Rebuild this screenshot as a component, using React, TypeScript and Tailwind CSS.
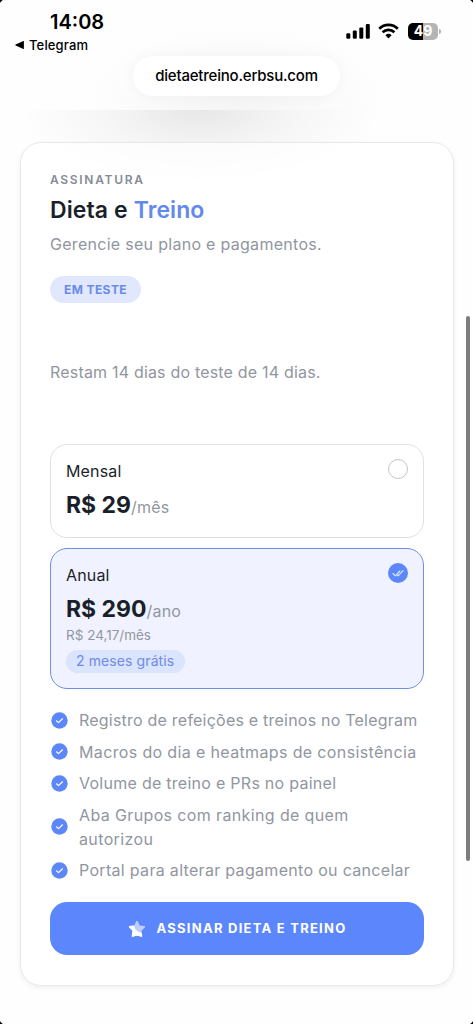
import clsx from "clsx";

const benefits = [
    { text: "Registro de refeições e treinos no Telegram", className: "tracking-[0.22px]" },
    { text: "Macros do dia e heatmaps de consistência", className: "tracking-[0.36px]" },
    { text: "Volume de treino e PRs no painel", className: "tracking-[0.27px]" },
    { text: "Aba Grupos com ranking de quem autorizou", className: "tracking-[0.37px]" },
    { text: "Portal para alterar pagamento ou cancelar", className: "tracking-[0.31px]" },
];

function StatusBar() {
    return (
        <div className="flex h-[56px] justify-between pt-[11px] pr-[32px] pl-[15px] text-black">
            <div>
                <p className="ml-[35px] h-[22px] text-[20px] leading-[22px] font-semibold whitespace-nowrap">14:08</p>
                <div className="mt-[4px] flex h-[16px] items-center gap-[5px]">
                    <svg width="9" height="8" viewBox="0 0 9 8" fill="currentColor">
                        <path d="M8.9.3v7.4c0 .3-.2.4-.5.3L.6 4.5a.5.5 0 0 1 0-.9L8.4.1c.3-.1.5 0 .5.2Z" />
                    </svg>
                    <span className="text-[13px] leading-4 font-medium tracking-[0.15px] whitespace-nowrap">Telegram</span>
                </div>
            </div>
            <div className="mt-[11px] flex h-[18px] items-center">
                <svg width="25" height="16" viewBox="0 0 25 16" fill="currentColor">
                    <rect x="0.3" y="10.3" width="4" height="5.4" rx="1.2" />
                    <rect x="6.8" y="7.6" width="4" height="8.1" rx="1.2" />
                    <rect x="13.3" y="4.4" width="4" height="11.3" rx="1.2" />
                    <rect x="19.8" y="0.9" width="4" height="14.8" rx="1.2" />
                </svg>
                <svg className="ml-[7px]" width="21" height="16" viewBox="0 0 21 16" fill="none" stroke="currentColor" strokeWidth="2.7">
                    <path d="M1.2 5.7a13.2 13.2 0 0 1 18.6 0" />
                    <path d="M4.6 9.3a8.4 8.4 0 0 1 11.8 0" />
                    <path d="M10.5 15.5 7.4 12.3a4.5 4.5 0 0 1 6.2 0Z" fill="currentColor" stroke="none" />
                </svg>
                <div className="ml-[9px] flex h-[17px] w-[30px] items-center justify-center rounded-[5px] bg-[linear-gradient(90deg,#000_50%,#b4b4b4_50%)] text-[14px] leading-none font-bold text-white">
                    49
                </div>
                <div className="ml-px h-[5px] w-[2px] rounded-r-full bg-[#b4b4b4]" />
            </div>
        </div>
    );
}

function CheckBadge() {
    return (
        <svg className="shrink-0" width="17" height="17" viewBox="0 0 17 17" fill="none">
            <circle cx="8.5" cy="8.5" r="8.2" fill="#5c87fa" />
            <path d="m5.5 8.8 2 1.8 4-3.8" stroke="#fff" strokeWidth="1.2" strokeLinecap="round" strokeLinejoin="round" />
        </svg>
    );
}

function PlanRadio({ checked }: { checked: boolean }) {
    if (!checked) {
        return <span className="size-5 rounded-full border border-[#c3c4c8]" />;
    }
    return (
        <svg width="20" height="20" viewBox="0 0 20 20" fill="none">
            <circle cx="10" cy="10" r="10" fill="#5c87fa" />
            <g stroke="#dfe8ff" strokeWidth="1.1" strokeLinecap="round" strokeLinejoin="round">
                <path d="m5 10.5 2.3 2.3 4.6-4.8" />
                <path d="m9.3 12 .8.8 5-5.2" />
            </g>
        </svg>
    );
}

type PlanProps = {
    name: string;
    price: string;
    period: string;
    selected?: boolean;
    children?: React.ReactNode;
};

function Plan({ name, price, period, selected = false, children }: PlanProps) {
    return (
        <div
            className={clsx(
                "flex justify-between rounded-[17px] border pt-[14px] pr-[15px] pl-[15px]",
                selected ? "h-[141px] border-[#6f8fdf] bg-[#f0f3ff]" : "h-[94px] border-[#dfe1e5] bg-white"
            )}
        >
            <div>
                <p className="h-6 text-[16px] leading-6 tracking-[0.15px] text-[#1b1f2a]">{name}</p>
                <p className="mt-[6px] flex h-8 items-baseline leading-8 whitespace-nowrap">
                    <span className="text-[23px] font-bold text-[#1b1f2a]">{price}</span>
                    <span className="text-[16px] tracking-[0.2px] text-[#9196a0]">{period}</span>
                </p>
                {children}
            </div>
            <PlanRadio checked={selected} />
        </div>
    );
}

export default function App() {
    return (
        <div className="relative h-[1024px] w-[473px] overflow-hidden bg-[#fefefe] font-['Inter',sans-serif]">
            <div className="absolute top-[110px] left-0 h-[85px] w-full bg-[radial-gradient(ellipse_180px_75px_at_200px_0px,rgba(0,0,0,0.09),rgba(0,0,0,0.03)_55%,transparent)]" />

            <header className="relative h-[110px] bg-[radial-gradient(ellipse_150px_80px_at_236px_105px,#f5f5f5,#fefefe)]">
                <StatusBar />
                <div className="mx-auto flex h-[40px] w-[207px] items-center justify-center rounded-full bg-white shadow-[0_0_16px_rgba(0,0,0,0.04)]">
                    <span className="pt-px text-[15px] font-medium tracking-[-0.2px] whitespace-nowrap text-black">dietaetreino.erbsu.com</span>
                </div>
            </header>

            <main className="relative mt-[32px] ml-[20px] h-[844px] w-[434px] rounded-[21px] border border-[#e6e8eb] bg-white/70 px-[29px] pt-[29px] shadow-[0_2px_5px_rgba(0,0,0,0.06)]">
                <p className="h-4 text-[12px] leading-4 font-semibold tracking-[1.7px] text-[#868b96]">ASSINATURA</p>
                <h1 className="mt-[6px] h-8 text-[23px] leading-8 font-semibold tracking-[0.1px] whitespace-nowrap text-[#1b1f2a]">
                    Dieta e <span className="text-[#6389ef]">Treino</span>
                </h1>
                <p className="mt-[6px] h-6 text-[16px] leading-6 tracking-[0.29px] whitespace-nowrap text-[#9196a0]">
                    Gerencie seu plano e pagamentos.
                </p>
                <div className="mt-[20px] flex h-[27px] w-[91px] items-center justify-center rounded-full bg-[#e1e8fd] text-[12px] font-bold tracking-[0.4px] whitespace-nowrap text-[#6b8bea]">
                    EM TESTE
                </div>
                <p className="mt-[57px] h-6 text-[16px] leading-6 tracking-[0.19px] whitespace-nowrap text-[#9196a0]">
                    Restam 14 dias do teste de 14 dias.
                </p>

                <div className="mt-[60px] flex w-[374px] flex-col gap-[10px]">
                    <Plan name="Mensal" price="R$ 29" period="/mês" />
                    <Plan name="Anual" price="R$ 290" period="/ano" selected>
                        <p className="h-5 text-[13.5px] leading-5 whitespace-nowrap text-[#9196a0]">R$ 24,17/mês</p>
                        <div className="mt-[5px] flex h-[23px] w-[119px] items-center rounded-full bg-[#dbe4fd] pb-[2px] pl-[10px] text-[14px] tracking-[0.1px] whitespace-nowrap text-[#6f8ae8]">
                            2 meses grátis
                        </div>
                    </Plan>
                </div>

                <ul className="mt-[19px] flex w-[374px] flex-col gap-[7.5px]">
                    {benefits.map((benefit) => (
                        <li key={benefit.text} className="flex items-center gap-[11px] pl-px">
                            <CheckBadge />
                            <span className={clsx("w-[341px] shrink-0 text-[16px] leading-6 text-[#9196a0]", benefit.className)}>
                                {benefit.text}
                            </span>
                        </li>
                    ))}
                </ul>

                <button className="mt-[20px] flex h-[53px] w-[374px] items-center justify-center gap-[11px] rounded-[17px] bg-[#5c87fc] text-[13px] font-bold tracking-[1.25px] whitespace-nowrap text-white">
                    <svg width="18" height="18" viewBox="0 0 18 18" strokeWidth="1.6" strokeLinejoin="round">
                        <path d="m9 1.6 2.2 4.6 5.1.7-3.7 3.6.9 5.6L9 14.7l-4.5 1.4.9-5.6-3.7-3.6 5.1-.7Z" fill="#bfceff" stroke="#bfceff" />
                        <path d="m1.7 6.9 3.7-.5c.6 3.1 3.1 6.2 7.700 7.100l.4 2.600L9 14.700l-4.500 1.400.9-5.600Z" fill="#fff" stroke="#fff" />
                    </svg>
                    ASSINAR DIETA E TREINO
                </button>
            </main>

            <div className="absolute top-[316px] right-[3px] h-[545px] w-[4px] rounded-full bg-[#7d7d7d]" />

            {/* rounded corners of the phone screen */}
            <div className="absolute top-0 left-0 size-[8px] bg-[radial-gradient(circle_at_100%_100%,transparent_9px,#000_10px)]" />
            <div className="absolute top-0 right-0 size-[8px] bg-[radial-gradient(circle_at_0%_100%,transparent_9px,#000_10px)]" />
            <div className="absolute bottom-0 left-0 size-[8px] bg-[radial-gradient(circle_at_100%_0%,transparent_9px,#000_10px)]" />
            <div className="absolute right-0 bottom-0 size-[8px] bg-[radial-gradient(circle_at_0%_0%,transparent_9px,#000_10px)]" />
        </div>
    );
}
